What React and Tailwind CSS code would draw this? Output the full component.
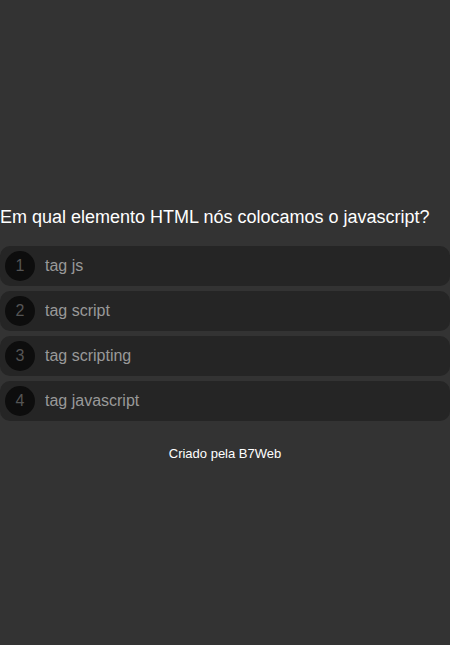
import React from 'react';

const question = 'Em qual elemento HTML nós colocamos o javascript?';
const options = ['tag js', 'tag script', 'tag scripting', 'tag javascript'];

export default function App() {
  return (
    <div className="min-h-screen bg-[#333333] pt-[207px] font-['Liberation_Sans',Arial,sans-serif]">
      <div className="text-[18px] leading-[21px] text-white mb-[18px]">{question}</div>
      <div className="flex flex-col gap-[5px]">
        {options.map((opt, i) => (
          <div key={i} className="flex items-center h-[40px] rounded-[10px] bg-[#252525] px-[5px]">
            <div className="w-[30px] h-[30px] rounded-full bg-[#0d0d0d] flex items-center justify-center text-[16px] text-[#555]">
              {i + 1}
            </div>
            <div className="ml-[10px] text-[16px] text-[#999]">{opt}</div>
          </div>
        ))}
      </div>
      <div className="text-center text-[13px] text-white mt-[23px]">Criado pela B7Web</div>
    </div>
  );
}
